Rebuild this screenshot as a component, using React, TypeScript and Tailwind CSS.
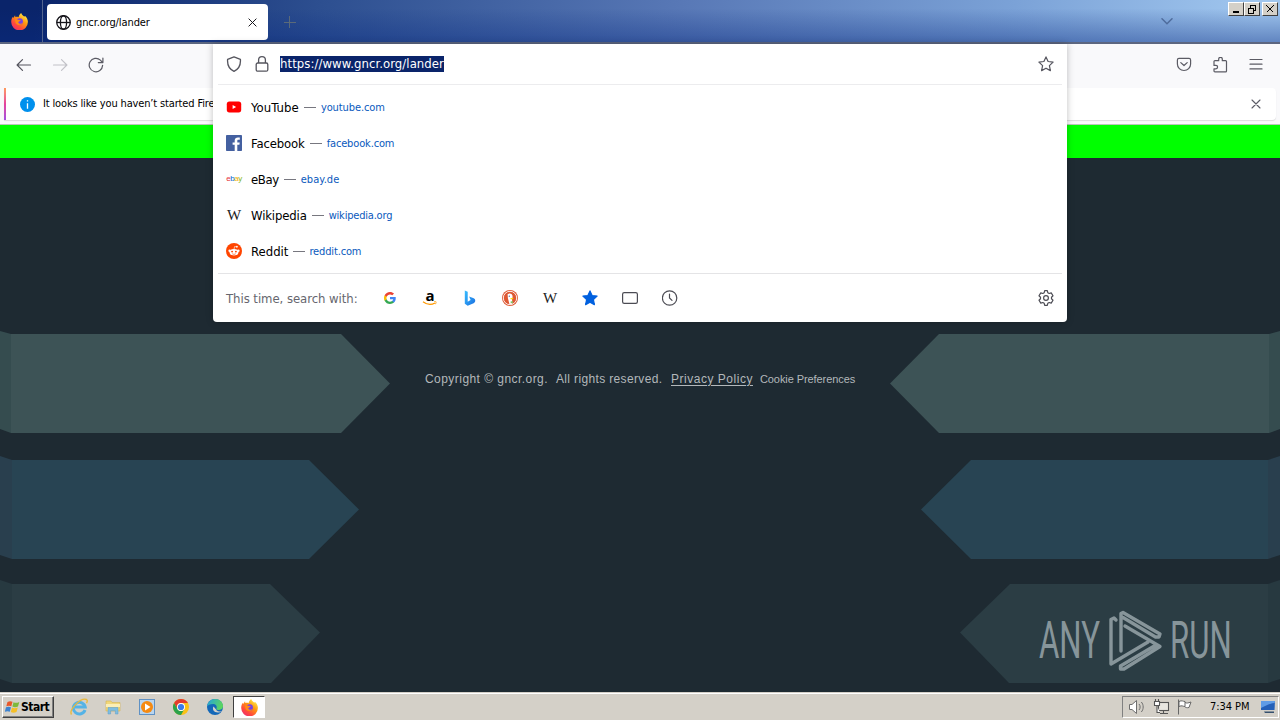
import type { ReactNode } from "react";

const UI = "font-['DejaVu_Sans_Condensed','DejaVu_Sans',sans-serif]";

function YouTube() {
  return (
    <svg width="16" height="16" viewBox="0 0 16 16">
      <rect x="0.800" y="2.600" width="14.400" height="10.800" rx="2.600" fill="#f00" />
      <path d="M6.600 5.900v4.200L10.100 8z" fill="#fff" />
    </svg>
  );
}

function Facebook() {
  return (
    <svg width="16" height="16" viewBox="0 0 16 16">
      <rect width="16" height="16" rx="0.8" fill="#4460a0" />
      <path d="M8.700 16V9.800H6.600V7.400h2.100V5.600c0-2.100 1.300-3.200 3.200-3.200.9 0 1.600.1 1.900.1v2.200h-1.300c-1 0-1.200.5-1.200 1.200v1.500h2.400l-.3 2.400h-2.100V16z" fill="#fff" />
    </svg>
  );
}

function Ebay() {
  return (
    <span className="flex w-4 justify-center font-['Liberation_Sans',sans-serif] text-[8px] leading-4 tracking-[-0.5px]">
      <span className="text-[#e53238]">e</span>
      <span className="text-[#0064d2]">b</span>
      <span className="text-[#f5af02]">a</span>
      <span className="text-[#86b817]">y</span>
    </span>
  );
}

function WikiW() {
  return (
    <span className="flex w-4 justify-center font-['Liberation_Serif',serif] text-[15px] leading-4 text-[#202122]">W</span>
  );
}

function Reddit() {
  return (
    <svg width="16" height="16" viewBox="0 0 16 16">
      <circle cx="8" cy="8" r="8" fill="#ff4500" />
      <g fill="#fff">
        <ellipse cx="8" cy="9.2" rx="4.4" ry="3.2" />
        <circle cx="3.6" cy="7.8" r="1.2" />
        <circle cx="12.4" cy="7.8" r="1.2" />
        <circle cx="10.9" cy="3.7" r="0.9" />
      </g>
      <path d="M8 6.2l.6-2.7 2.2.4" fill="none" stroke="#fff" strokeWidth="0.6" />
      <circle cx="6.1" cy="8.6" r="0.95" fill="#ff4500" />
      <circle cx="9.9" cy="8.6" r="0.95" fill="#ff4500" />
      <path d="M6.2 10.7c1 .8 2.6.8 3.6 0" fill="none" stroke="#ff4500" strokeWidth="0.6" />
    </svg>
  );
}

function Google() {
  return (
    <svg width="12" height="12" viewBox="0 0 48 48">
      <path fill="#4285F4" d="M47 24.5c0-1.6-.1-3.200-.4-4.700H24v9h13c-.6 3-2.300 5.500-4.800 7.200v6h7.800c4.500-4.200 7-10.300 7-17.500z" />
      <path fill="#34A853" d="M24 48c6.500 0 11.900-2.100 15.900-5.800l-7.800-6c-2.100 1.400-4.900 2.300-8.100 2.300-6.200 0-11.500-4.200-13.400-9.900h-8v6.200C6.500 42.600 14.600 48 24 48z" />
      <path fill="#FBBC04" d="M10.600 28.600a14.500 14.500 0 0 1 0-9.200v-6.200h-8a24 24 0 0 0 0 21.600z" />
      <path fill="#EA4335" d="M24 9.500c3.500 0 6.700 1.200 9.200 3.600l6.900-6.900C35.900 2.400 30.500 0 24 0 14.600 0 6.500 5.400 2.600 13.200l8 6.200C12.500 13.700 17.800 9.500 24 9.500z" />
    </svg>
  );
}

function Amazon() {
  return (
    <span className="relative flex size-4 justify-center">
      <span className="font-['Open_Sans',sans-serif] text-[15px] leading-[10px] font-bold text-black">a</span>
      <svg className="absolute inset-x-0 bottom-0" width="16" height="5" viewBox="0 0 16 5">
        <path d="M1 .8c4.500 3.400 8.500 3.200 12 1.200" fill="none" stroke="#f90" strokeWidth="1.200" />
        <path d="M12.200.6c1.400-.4 2.200 0 1.900.7l-.6 1.900" fill="none" stroke="#f90" strokeWidth="0.8" />
      </svg>
    </span>
  );
}

function Bing() {
  return (
    <svg width="16" height="16" viewBox="0 0 16 16">
      <defs>
        <linearGradient id="bing" x1="0" y1="0" x2="1" y2="1">
          <stop offset="0" stopColor="#37bdff" />
          <stop offset="1" stopColor="#1b6fe0" />
        </linearGradient>
      </defs>
      <path d="M2.800.6l2.900 1.100v10l2.900-1.700-1.500-3.500 4 1.500c2.900 1.100 2.700 4.100.5 5.300L5.700 15.700l-2.900-2z" fill="url(#bing)" />
    </svg>
  );
}

function Duck() {
  return (
    <svg width="16" height="16" viewBox="0 0 16 16">
      <circle cx="8" cy="8" r="8" fill="#de5833" />
      <circle cx="8" cy="8" r="6.700" fill="none" stroke="#fff" strokeWidth="0.900" />
      <path d="M5.600 4.300c2.200-1.600 5.200-.3 5 2.600-.1 1.100-.6 1.500-.6 2.600l.6 4.300-3.200.3L5.900 8.300z" fill="#fff" />
      <path d="M8.300 8.300l3.200-.5-.6 1.400H8.500z" fill="#fdd20a" />
      <path d="M8 12l2.600-1v2.400z" fill="#65bc46" />
      <circle cx="7.300" cy="6.200" r="0.600" fill="#2d4f8e" />
    </svg>
  );
}

function Star({ filled }: { filled?: boolean }) {
  return (
    <svg width="16" height="16" viewBox="0 0 16 16">
      <path
        d="M8 .9l2.100 4.600 5 .6-3.700 3.500 1 5L8 12.200l-4.400 2.400 1-5L.9 6.100l5-.6z"
        fill={filled ? "#0060df" : "none"}
        stroke={filled ? "#0060df" : "#55555e"}
        strokeWidth="1.200"
        strokeLinejoin="round"
      />
    </svg>
  );
}

function TabsIcon() {
  return (
    <svg width="16" height="16" viewBox="0 0 16 16">
      <rect x="0.600" y="2.600" width="14.800" height="10.800" rx="1.600" fill="none" stroke="#4c4c54" strokeWidth="1.200" />
    </svg>
  );
}

function Clock() {
  return (
    <svg width="16" height="16" viewBox="0 0 16 16" fill="none" stroke="#4c4c54" strokeWidth="1.200" strokeLinecap="round">
      <circle cx="7.600" cy="8" r="7.200" />
      <path d="M7.500 4v4l2.500 2.400" />
    </svg>
  );
}

function Gear() {
  return (
    <svg width="16" height="16" viewBox="0 0 16 16" fill="none" stroke="#4c4c54" strokeWidth="1.200" strokeLinejoin="round">
      <path d="M6.700.7h2.600l.5 2 1.400.8 2-.6 1.800 2.900-1.500 1.400v1.600l1.500 1.400-1.800 2.900-2-.6-1.400.8-.5 2H6.700l-.5-2-1.400-.8-2 .6L1 10.200l1.500-1.400V7.200L1 5.800l1.800-2.900 2 .6 1.400-.8z" />
      <circle cx="8" cy="8" r="2.400" />
    </svg>
  );
}

function Shield() {
  return (
    <svg width="16" height="16" viewBox="0 0 16 16" fill="none" stroke="#55555e" strokeWidth="1.300" strokeLinejoin="round">
      <path d="M8 .8l6.400 2.600c.4 5-1.500 9.600-6.400 11.900C3.100 13 1.200 8.400 1.600 3.400z" />
    </svg>
  );
}

function Lock() {
  return (
    <svg width="16" height="16" viewBox="0 0 16 16" fill="none" stroke="#55555e" strokeWidth="1.300">
      <rect x="2.200" y="7" width="11.600" height="8.200" rx="1.500" />
      <path d="M4.600 7V3.900a3.400 3.200 0 0 1 6.800 0V7" />
    </svg>
  );
}

function Cross({ size, color }: { size: number; color: string }) {
  return (
    <svg width={size} height={size} viewBox="0 0 10 10" stroke={color} strokeWidth="1.100" strokeLinecap="round">
      <path d="M1 1l8 8M9 1l-8 8" />
    </svg>
  );
}

function Arrow({ color, flip }: { color: string; flip?: boolean }) {
  return (
    <svg className={flip ? "rotate-180" : ""} width="16" height="16" viewBox="0 0 16 16" fill="none" stroke={color} strokeWidth="1.200" strokeLinecap="round" strokeLinejoin="round">
      <path d="M14.500 8H1.300M6.500 2.600L1.100 8l5.400 5.400" />
    </svg>
  );
}

function Firefox({ size, id }: { size: number; id: string }) {
  return (
    <svg width={size} height={size} viewBox="0 0 16 16">
      <defs>
        <linearGradient id={id} x1="0.850" y1="0.050" x2="0.200" y2="0.950">
          <stop offset="0" stopColor="#fff44f" />
          <stop offset="0.400" stopColor="#ff980e" />
          <stop offset="0.750" stopColor="#ff4a3c" />
          <stop offset="1" stopColor="#f0306a" />
        </linearGradient>
      </defs>
      <path d="M9.600 0c.3 1.500 1.700 2.300 2.700 3.300 1-.1.700-.8.700-.8 1.900 1.500 3 4 2.900 6A7.800 7.800 0 0 1 .2 8.500c0-2.100.5-3.700 1.700-5l.3 1.100L3.800 2l.3 1.700c1.200-.3 2.100-.2 3 .2C7.500 2.100 8.400.7 9.600 0z" fill={`url(#${id})`} />
      <circle cx="8.200" cy="8" r="3" fill="#7542e5" />
      <path d="M3.700 6.300c1.400-.7 2.500-.3 3.500.4l2 .2c-.3 1.100-2.100 1-2.400 2 .8 1.600 3 1.400 4.200.5-1 2.400-5.500 2.600-6.700-.3z" fill="#ff8a16" />
    </svg>
  );
}

const SITES: { icon: ReactNode; name: string; domain: string; nameClass: string; gapClass: string; domainClass: string }[] = [
  { icon: <YouTube />, name: "YouTube", domain: "youtube.com", nameClass: "tracking-[0.1px]", gapClass: "mx-[5px]", domainClass: "tracking-[-0.1px]" },
  { icon: <Facebook />, name: "Facebook", domain: "facebook.com", nameClass: "tracking-[-0.15px]", gapClass: "mx-[5px]", domainClass: "tracking-[-0.15px]" },
  { icon: <Ebay />, name: "eBay", domain: "ebay.de", nameClass: "tracking-[-0.4px]", gapClass: "mx-[5px]", domainClass: "tracking-[0.05px]" },
  { icon: <WikiW />, name: "Wikipedia", domain: "wikipedia.org", nameClass: "tracking-[-0.15px]", gapClass: "mx-[5px]", domainClass: "tracking-[-0.2px]" },
  { icon: <Reddit />, name: "Reddit", domain: "reddit.com", nameClass: "tracking-normal", gapClass: "mr-1 ml-[5px]", domainClass: "tracking-[-0.15px]" },
];

function WinButton({ children }: { children: ReactNode }) {
  return (
    <div className="flex h-[14px] w-4 items-center justify-center border border-t-white border-r-[#404040] border-b-[#404040] border-l-white bg-[#d4d0c8]">
      <svg width="12" height="10" viewBox="0 0 12 10" fill="none" stroke="#000" shapeRendering="crispEdges">
        {children}
      </svg>
    </div>
  );
}

function TitleBar() {
  return (
    <header className="flex h-11 border-b-2 border-[#5c6680] bg-[linear-gradient(to_bottom,rgba(10,36,106,0)_20%,rgba(10,44,130,0.42)_100%),linear-gradient(98deg,#0a246a_3%,#2d4f90_25%,#5878b6_53%,#7ba2d7_79%,#a0c6ee_98%)]">
      <div className="flex w-[43px] items-center justify-center border-r border-[#52648f] pr-[3px]">
        <Firefox size={17} id="fx-title" />
      </div>
      <div className="mt-1 ml-1 flex h-9 w-[221px] items-center rounded bg-white pr-[11px] pl-[9px]">
        <svg width="15" height="15" viewBox="0 0 16 16" fill="none" stroke="#15141a" strokeWidth="1.400">
          <circle cx="8" cy="8" r="7.200" />
          <ellipse cx="8" cy="8" rx="3.300" ry="7.200" />
          <path d="M.8 8h14.400" />
        </svg>
        <span className="ml-[5px] flex-1 pt-[2px] text-[11px] leading-4 tracking-[-0.1px] text-black">gncr.org/lander</span>
        <Cross size={9} color="#15141a" />
      </div>
      <svg className="mt-4 ml-4" width="12" height="12" viewBox="0 0 12 12" stroke="#5b6a79" strokeWidth="1">
        <path d="M5.500 0v12M0 6.500h12" />
      </svg>
      <div className="flex-1" />
      <svg className="mt-[17px] mr-[55px]" width="12" height="9" viewBox="0 0 12 9" fill="none" stroke="#4f6c9c" strokeWidth="1.500" strokeLinecap="round">
        <path d="M1 1.800l5 4.900 5-4.900" />
      </svg>
      <div className="mt-[2px] mr-[2px] flex">
        <WinButton><path d="M3 8h6" strokeWidth="2" /></WinButton>
        <WinButton>
          <path d="M4 1.500h6M4.500 2v2M9.500 2v4.500H8M2 4.500h6M2.500 5v4.500h5V5" />
        </WinButton>
        <div className="w-[2px]" />
        <WinButton><path d="M2.500 1.500l7 7M9.500 1.500l-7 7" strokeWidth="1.400" /></WinButton>
      </div>
    </header>
  );
}

function Toolbar() {
  return (
    <div className="flex h-11 items-center bg-[#f9f9fb] px-4 pb-[3px]">
      <div className="flex gap-5">
        <Arrow color="#55555e" />
        <Arrow color="#c2c2c8" flip />
        <svg width="16" height="16" viewBox="0 0 16 16" fill="none" stroke="#5b5b64" strokeWidth="1.200" strokeLinecap="round" strokeLinejoin="round">
          <path d="M14.600 8.400a6.700 6.700 0 1 1-2.200-5.300l2 2.200M14.900 1v4.600h-4.600" />
        </svg>
      </div>
      <div className="flex-1" />
      <div className="flex gap-5">
        <svg width="16" height="16" viewBox="0 0 16 16" fill="none" stroke="#5b5b64" strokeWidth="1.200" strokeLinecap="round" strokeLinejoin="round">
          <path d="M3 1.300h10a1.600 1.600 0 0 1 1.600 1.600v4a6.600 6.600 0 0 1-13.200 0v-4A1.600 1.600 0 0 1 3 1.300zM4.800 5.600L8 8.500l3.200-2.900" />
        </svg>
        <svg width="16" height="16" viewBox="0 0 16 16" fill="none" stroke="#5b5b64" strokeWidth="1.200" strokeLinejoin="round">
          <path d="M2 8.400V4.600a.9.900 0 0 1 .9-.9h3.800V2.100a1.800 1.800 0 0 1 3.600 0v1.600h3.300a.9.900 0 0 1 .9.900v9.300a.9.900 0 0 1-.9.900H2.900a.9.900 0 0 1-.9-.9v-2.100h1.900a1.700 1.700 0 0 0 0-3.400z" />
        </svg>
        <svg width="16" height="16" viewBox="0 0 16 16" fill="none" stroke="#5b5b64" strokeWidth="1.200" strokeLinecap="round">
          <path d="M2 2.500h12M2 7.200h12M2 11.900h12" />
        </svg>
      </div>
    </div>
  );
}

function Notification() {
  return (
    <div className="h-[37px] border-b border-[#b9c6b9] bg-[#f9f9fb] pr-1 pb-1 pl-1">
      <div className="flex h-8 items-center rounded-r bg-white shadow-[0_1px_1px_rgba(0,0,0,0.12)]">
        <div className="h-8 w-[2px] bg-linear-to-b from-[#ff9a5a] via-[#e5409c] to-[#a34de0]" />
        <svg className="ml-[14px]" width="15" height="15" viewBox="0 0 16 16">
          <circle cx="8" cy="8" r="8" fill="#0090ed" />
          <path d="M8 3.400v1.500M8 6.700v5.900" stroke="#fff" strokeWidth="1.400" />
        </svg>
        <span className="ml-2 flex-1 text-[11px] leading-4 tracking-[-0.15px] whitespace-nowrap text-black">It looks like you haven’t started Firefox</span>
        <div className="mr-[15px]"><Cross size={10} color="#5b5b66" /></div>
      </div>
    </div>
  );
}

function UrlDropdown() {
  return (
    <section className="absolute top-11 left-[213px] flex h-[278px] w-[854px] flex-col rounded-b-[4px] bg-white px-[5px] shadow-[0_0_7px_rgba(0,0,0,0.25)]">
      <div className="flex h-[41px] items-center border-b border-[#ececee] px-2">
        <Shield />
        <div className="ml-3"><Lock /></div>
        <span className="ml-[10px] bg-[#0a246a] text-[13px] leading-4 tracking-[0.07px] text-white">https://www.gncr.org/lander</span>
        <div className="flex-1" />
        <Star />
      </div>
      <ul className="flex h-[189px] flex-col border-b border-[#e4e4e6] pt-1">
        {SITES.map((s) => (
          <li key={s.name} className="flex h-9 items-center pl-2">
            {s.icon}
            <span className={`ml-[9px] pt-[2px] text-[13px] leading-4 text-black ${s.nameClass}`}>{s.name}</span>
            <span className={`mt-px h-px w-3 bg-[#77777f] ${s.gapClass}`} />
            <span className={`pt-[2px] text-[11px] leading-4 text-[#0a59bd] ${s.domainClass}`}>{s.domain}</span>
          </li>
        ))}
      </ul>
      <div className="flex h-12 items-center pr-2 pl-2">
        <span className="w-[156px] pt-[2px] text-[13px] leading-4 tracking-[-0.05px] text-[#66666e]">This time, search with:</span>
        <div className="flex flex-1 items-center gap-6">
          <div className="flex size-4 items-center justify-center"><Google /></div>
          <Amazon />
          <Bing />
          <Duck />
          <WikiW />
          <Star filled />
          <TabsIcon />
          <Clock />
        </div>
        <Gear />
      </div>
    </section>
  );
}

function Ribbons() {
  return (
    <g>
      <path d="M0 173l11 3v99l-11-4z" fill="#354c4f" />
      <path d="M11 176h330l49 49.500L341 275H11z" fill="#3d5356" />
      <path d="M0 298l12 4v99l-12-4z" fill="#293f4e" />
      <path d="M12 302h297l50 49.500L309 401H12z" fill="#284453" />
      <path d="M0 422l12 4v99l-12-4z" fill="#273940" />
      <path d="M12 426h258l50 48.500L271 525H12z" fill="#2b3d44" />
    </g>
  );
}

function Backdrop() {
  return (
    <svg className="absolute inset-x-0 top-[33px]" width="1280" height="534" viewBox="0 0 1280 534">
      <Ribbons />
      <g transform="translate(1280 0) scale(-1 1)"><Ribbons /></g>
    </svg>
  );
}

function Watermark() {
  return (
    <div className="absolute top-[483px] left-[1039px] flex h-[66px] w-[192px] items-center justify-between text-[#87959a]">
      <span className="w-[64px] origin-left scale-x-[0.600] font-['Roboto',sans-serif] text-[52px] leading-[66px]">ANY</span>
      <svg className="mr-1" width="56" height="64" viewBox="0 0 56 64" fill="none" stroke="currentColor" strokeWidth="3.400" strokeLinejoin="round" strokeLinecap="round">
        <path d="M14 42V4.500l2-1L53 25l-1 3h-3.500L16 8.500" />
        <path d="M9 11L7 9 4 10.500V55l37-22" />
        <path d="M18 17l35 20.500L17 60h-3.500v-3L49 36" />
      </svg>
      <span className="w-[61px] origin-left scale-x-[0.600] font-['Roboto',sans-serif] text-[52px] leading-[66px]">RUN</span>
    </div>
  );
}

function Page() {
  return (
    <main className="relative flex-1 overflow-hidden bg-[#1e2a32]">
      <Backdrop />
      <div className="relative h-[33px] bg-[#00ff00]" />
      <footer className="relative mt-[212px] ml-[425px] flex items-center font-['Liberation_Sans',Arial,sans-serif] text-[12px] leading-4 whitespace-nowrap text-[#b3b8bb]">
        <span className="w-[131px] tracking-[0.450px]">Copyright © gncr.org.</span>
        <span className="w-[115px] tracking-[0.350px]">All rights reserved.</span>
        <span className="tracking-[0.520px] underline underline-offset-2">Privacy Policy</span>
        <span className="ml-[7px] pt-px text-[11px] tracking-[-0.080px]">Cookie Preferences</span>
      </footer>
      <Watermark />
    </main>
  );
}

function IeIcon() {
  return (
    <svg width="18" height="18" viewBox="0 0 18 18" fill="none">
      <path d="M15 12a6 5.800 0 1 1 .2-3H5" stroke="#55b3e6" strokeWidth="3" />
      <path d="M1.500 16.500C-1.500 12 11-1 16.500 1.500c1.300.7.600 2.700 0 3.600" stroke="#e9b93c" strokeWidth="1.400" />
    </svg>
  );
}

function FolderIcon() {
  return (
    <svg width="18" height="18" viewBox="0 0 18 18">
      <path d="M2 3h5l1 1.500h8V13H2z" fill="#f1d77a" stroke="#d4b452" strokeWidth="0.600" />
      <path d="M2 6h14v3H2z" fill="#fbeeb6" />
      <path d="M4 16V9.500h10V16h-2.600v-3.200H6.600V16z" fill="#7fbde0" stroke="#5c9fc8" strokeWidth="0.500" />
    </svg>
  );
}

function MediaIcon() {
  return (
    <svg width="18" height="18" viewBox="0 0 18 18">
      <rect x="1.500" y="1.500" width="15" height="15" fill="#b9d5ef" stroke="#5f91c4" />
      <circle cx="9" cy="9" r="6" fill="#f58a12" />
      <path d="M7 5.500v7l5.500-3.500z" fill="#fff" />
    </svg>
  );
}

function ChromeIcon() {
  return (
    <svg width="18" height="18" viewBox="0 0 18 18">
      <circle cx="9" cy="9" r="8" fill="#fbc116" />
      <path d="M2.070 5A8 8 0 0 1 15.930 5H9a4 4 0 0 0-3.460 6z" fill="#e33b2e" />
      <path d="M2.070 5A8 8 0 0 0 9 17l3.460-6A4 4 0 0 1 5.540 11z" fill="#2ba24c" />
      <circle cx="9" cy="9" r="4" fill="#fff" />
      <circle cx="9" cy="9" r="3.100" fill="#3a7bea" />
    </svg>
  );
}

function EdgeIcon() {
  return (
    <svg width="18" height="18" viewBox="0 0 18 18">
      <defs>
        <linearGradient id="edge" x1="0" y1="0" x2="1" y2="0.300">
          <stop offset="0" stopColor="#22a3df" />
          <stop offset="1" stopColor="#5bd561" />
        </linearGradient>
      </defs>
      <circle cx="9" cy="9" r="8" fill="#1468b8" />
      <path d="M1.100 8.500C1.600 4 5 1 9 1c5 0 8 3.500 8 7 0 3-2.500 4-4.700 4-2 0-2.300-.8-1.800-1.500C11.500 8 9.500 6 7 6 4 6 1.800 7 1.100 8.500z" fill="url(#edge)" />
      <path d="M7.500 8.500c-1.500 2.500 0 6 4.500 6 1.500 0 2.700-.4 3.700-1-1 .1-5 .2-5.800-2.300z" fill="#d4d0c8" />
    </svg>
  );
}

function Taskbar() {
  return (
    <footer className="flex h-7 items-center border-t border-[#d4d0c8] bg-[#d4d0c8] shadow-[inset_0_1px_0_#fff]">
      <div className="mb-px ml-[2px] mt-[2px] flex h-[22px] w-[52px] items-center border border-t-white border-r-[#404040] border-b-[#404040] border-l-white pl-[2px] shadow-[inset_-1px_-1px_0_#808080]">
        <svg width="16" height="16" viewBox="0 0 16 16">
          <path d="M2.500 3C4.500 1.800 6 2 7.500 2.800L6.300 7.300c-1.500-.8-3-.9-5 0z" fill="#e8582a" />
          <path d="M8.500 3.200c1.800 1 3.500.8 5.800-.2L13 7.500c-2 1-4 1-5.600 0z" fill="#7db93c" />
          <path d="M1 8.300c2-.9 3.500-.8 5 0L4.800 12.800c-1.500-.8-3-.9-5 0z" fill="#3d83d0" />
          <path d="M7 8.600c1.800 1 3.600.9 5.800-.1l-1.300 4.500c-2 1-4 1-5.700.1z" fill="#f5bf27" />
        </svg>
        <span className="text-[12px] leading-4 font-bold tracking-[-0.500px] text-black">Start</span>
      </div>
      <div className="ml-4 flex flex-1 items-center">
        <div className="flex items-center gap-4">
          <IeIcon />
          <FolderIcon />
          <MediaIcon />
          <ChromeIcon />
          <EdgeIcon />
        </div>
        <div className="mt-px ml-[9px] flex h-[22px] w-8 items-center justify-center border border-t-[#404040] border-r-white border-b-white border-l-[#404040] bg-white">
          <Firefox size={17} id="fx-task" />
        </div>
      </div>
      <div className="mt-px mr-px flex h-[22px] w-[157px] items-center border border-t-[#808080] border-r-white border-b-white border-l-[#808080] pl-[5px]">
        <svg width="18" height="18" viewBox="0 0 18 18" fill="#fff" stroke="#6e6e6e" strokeWidth="1">
          <path d="M1.500 6.500H4L8.500 2.500v13L4 11.500H1.500z" />
          <path d="M11 6c1.500 1.500 1.500 4.500 0 6M13.300 4c2.500 2.500 2.500 7.500 0 10" fill="none" />
        </svg>
        <svg className="ml-[7px]" width="18" height="18" viewBox="0 0 18 18" fill="#e8e6e0" stroke="#555" strokeWidth="1.100">
          <rect x="5.500" y="4.500" width="10" height="8" />
          <path d="M7 15.500h8M10.500 13v2" />
          <path d="M1.500 3.500h5v4h-5zM2.500 1v2M5.500 1v2M4 8v6.500h3" fill="#fff" />
        </svg>
        <svg className="ml-[5px]" width="18" height="18" viewBox="0 0 18 18" fill="#fff" stroke="#666" strokeWidth="1">
          <path d="M2.500 1.500v15M3 3.500c3-1.500 4 0 6 0v5c-2 0-3-1.500-6 0zM9 4.500c2 1 3 .5 6-.5l-2 5.500c-2 .5-3 0-4-.5" />
        </svg>
        <span className="ml-4 text-[11px] leading-4 tracking-[-0.05px] whitespace-nowrap text-black">7:34 PM</span>
        <svg className="ml-auto mr-0.5" width="16" height="16" viewBox="0 0 16 16">
          <path d="M1 2h14l-.5 9H1z" fill="#2460b8" />
          <path d="M1 2h14l-.2 2C9 4.500 5 7 1 9z" fill="#5f9ce6" />
          <path d="M4 12.500h10v1.500H5z" fill="#35506e" />
        </svg>
      </div>
    </footer>
  );
}

export default function App() {
  return (
    <div className={`relative flex h-[720px] w-[1280px] flex-col overflow-hidden ${UI}`}>
      <TitleBar />
      <Toolbar />
      <Notification />
      <Page />
      <Taskbar />
      <UrlDropdown />
    </div>
  );
}
